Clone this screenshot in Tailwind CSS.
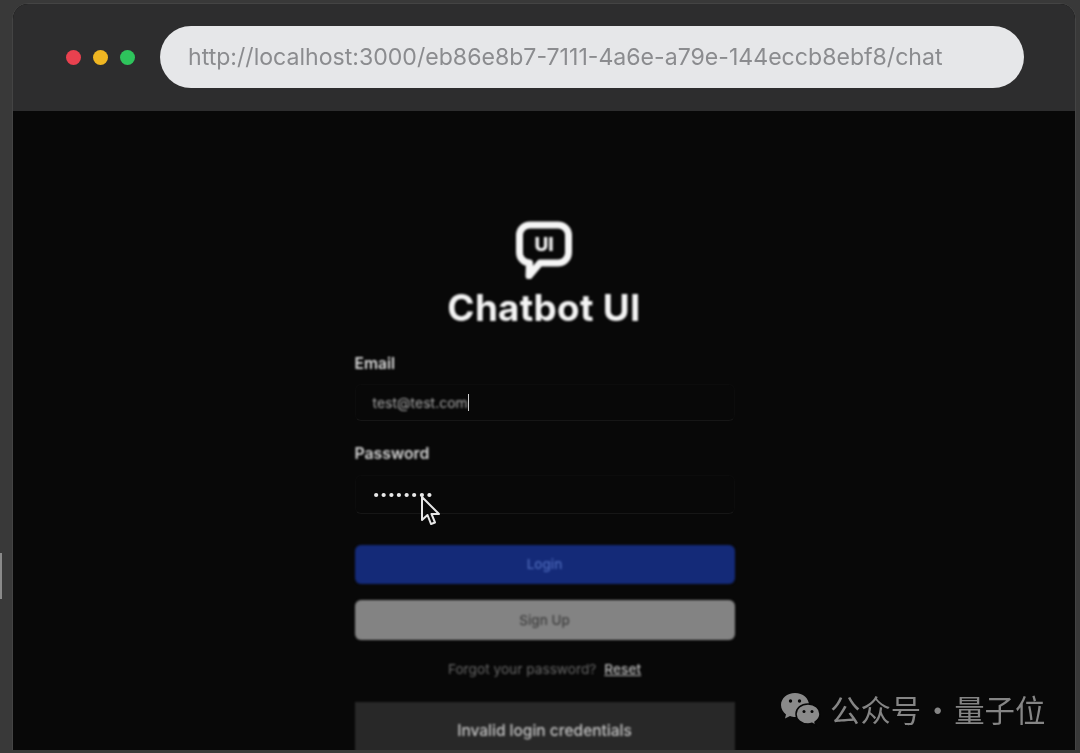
<!doctype html>
<html lang="en">
<head>
<meta charset="utf-8">
<title>Chatbot UI</title>
<script src="https://cdn.jsdelivr.net/npm/@tailwindcss/browser@4"></script>
</head>
<body class="m-0 overflow-hidden bg-[#353535]">
<div class="relative w-[1080px] h-[753px] overflow-hidden bg-[#393939] pt-[3px] pl-[12px] pr-[4px] pb-[3px] font-['Inter','Liberation_Sans',sans-serif]">
  <div class="absolute left-0 top-[553px] w-[2px] h-[46px] bg-[#8a8a8a] blur-[0.5px]"></div>
  <div class="h-full flex flex-col rounded-t-[16px] overflow-hidden border-t border-l border-r border-[#444444] bg-[#070707]">
    <header class="h-[107px] shrink-0 bg-[#2d2d2e] flex items-center pl-[53px] pb-[1px]">
      <div class="flex gap-[12px] blur-[0.7px]">
        <span class="w-[15px] h-[15px] rounded-full bg-[#e9414f]"></span>
        <span class="w-[15px] h-[15px] rounded-full bg-[#efb622]"></span>
        <span class="w-[15px] h-[15px] rounded-full bg-[#2ec45c]"></span>
      </div>
      <div class="ml-[25px] w-[864px] h-[62px] rounded-full bg-[#e6e7e9] flex items-center pl-[28px] blur-[0.6px]">
        <span class="text-[23.1px] text-[#8b8c8f] whitespace-nowrap blur-[0.5px]">http://localhost:3000/eb86e8b7-7111-4a6e-a79e-144eccb8ebf8/chat</span>
      </div>
    </header>
    <main class="flex-1 flex flex-col items-center pt-[110px] bg-[#080808]">
      <svg class="w-[60px] h-[58px] blur-[0.8px]" viewBox="0 0 60 58" fill="none" aria-hidden="true">
        <path d="M16 4H44C50 4 54.500 8.500 54.500 14.500V31.500C54.500 37.500 50 42 44 42H26L15 55L15.500 42C10 41.500 5.500 37.500 5.500 31.500V14.500C5.500 8.500 10 4 16 4Z" fill="#080808" stroke="#f5f5f5" stroke-width="7" stroke-linejoin="round"/>
        <text x="30" y="30" text-anchor="middle" font-family="Inter, sans-serif" font-size="19" font-weight="800" fill="#f0f0f0">UI</text>
      </svg>
      <h1 class="mt-[8px] text-[36.8px] leading-[42px] font-bold text-[#f4f4f4] tracking-[0.3px] blur-[0.8px]">Chatbot UI</h1>
      <form class="w-[380px] ml-[1px] mt-[25px] flex flex-col">
        <label class="text-[15.6px] leading-[20px] font-semibold text-[#dddddd] blur-[0.8px]">Email</label>
        <div class="mt-[10px] h-[37px] rounded-[6px] border border-[#0c0c0c] border-b-[#161616] flex items-center pl-[17px]">
          <span class="text-[14px] text-[#a8a8a8] blur-[0.9px]">test@test.com</span>
          <span class="w-[1.5px] h-[17px] bg-[#cfcfcf] blur-[0.4px]"></span>
        </div>
        <label class="mt-[23px] text-[15.8px] leading-[20px] font-semibold text-[#d4d4d4] blur-[0.8px]">Password</label>
        <div class="relative mt-[11px] h-[39px] rounded-[6px] border border-[#0c0c0c] border-b-[#161616] flex items-center pl-[17px]">
          <span class="text-[13px] tracking-[0.3px] text-[#e8e8e8] blur-[0.5px]">••••••••</span>
          <svg class="absolute left-[64px] top-[19px] w-[22px] h-[32px] blur-[0.6px]" viewBox="0 0 22 32" aria-hidden="true">
            <path d="M2 2V25L7.5 20L11 29L15 27.5L11.5 19H19Z" fill="#0a0a0a" stroke="#e6e6e6" stroke-width="2" stroke-linejoin="round"/>
          </svg>
        </div>
        <button type="button" class="mt-[31px] h-[39px] rounded-[6px] bg-[#142a78] text-[13.5px] font-medium text-[#4b67b8] blur-[0.8px]">Login</button>
        <button type="button" class="mt-[16px] h-[40px] rounded-[6px] bg-[#838383] text-[13.5px] font-medium text-[#3f3f3f] blur-[0.8px]">Sign Up</button>
        <p class="mt-[19px] h-[20px] text-center text-[13.7px] leading-[20px] text-[#666666] blur-[0.8px]">Forgot your password?<a class="ml-[8px] underline font-medium text-[#bdbdbd]">Reset</a></p>
        <div class="mt-[23px] h-[60px] pb-[2px] bg-[#282828] flex items-center justify-center text-[15.5px] font-medium text-[#c4c4c4] blur-[0.8px]">Invalid login credentials</div>
      </form>
    </main>
  </div>
  <div class="absolute left-[780px] top-[692px] flex items-center blur-[0.4px]">
    <svg class="w-[41px] h-[35px]" viewBox="0 0 41 35" aria-hidden="true">
      <path d="M15 1C7 1 1 6.500 1 13C1 17 3 20 6 22.500L5 26.500L10 24C12 24.700 13.500 25 15 25C22 25 29 19 29 13C29 6.500 23 1 15 1Z" fill="#8a8a8a"/>
      <path d="M28 12C21 12 16 16.500 16 22C16 27.500 21 32 28 32C29.500 32 31 31.700 32 31.300L36 33.500L35 30C38 28 40 25 40 22C40 16.500 35 12 28 12Z" fill="#8a8a8a" stroke="#070707" stroke-width="1.500"/>
      <circle cx="10.500" cy="9" r="1.700" fill="#070707"/><circle cx="19.500" cy="9" r="1.700" fill="#070707"/>
      <circle cx="24" cy="19.500" r="1.500" fill="#070707"/><circle cx="32" cy="19.500" r="1.500" fill="#070707"/>
    </svg>
    <span class="ml-[9px] -mt-[2px] text-[30.4px] leading-[36px] [word-spacing:-5.5px] text-[#858585] whitespace-nowrap font-['Noto_Sans_CJK_SC','Noto_Sans',sans-serif]">公众号 · 量子位</span>
  </div>
</div>
</body>
</html>
